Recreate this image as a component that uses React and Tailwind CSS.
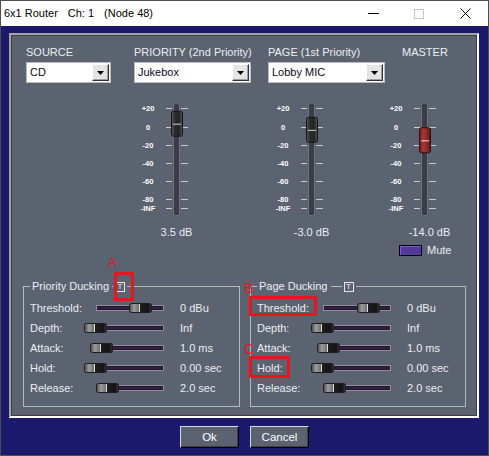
import React from 'react';

const TICKS = [
  ['+20', 8],
  ['0', 27],
  ['-20', 45],
  ['-40', 63],
  ['-60', 81],
  ['-80', 99],
  ['-INF', 108],
];

const PRIORITY_ROWS = [
  ['Threshold:', 68, 33, '0 dBu'],
  ['Depth:', 80, 0, 'Inf'],
  ['Attack:', 74, 0, '1.0 ms'],
  ['Hold:', 80, 0, '0.00 sec'],
  ['Release:', 68, 0, '2.0 sec'],
];

const PAGE_ROWS = [
  ['Threshold:', 68, 34, '0 dBu'],
  ['Depth:', 80, 0, 'Inf'],
  ['Attack:', 74, 0, '1.0 ms'],
  ['Hold:', 80, 0, '0.00 sec'],
  ['Release:', 68, 0, '2.0 sec'],
];

function Select({ value, className }) {
  return (
    <div className={`flex h-[21px] items-center border border-[#b9bdc3] bg-white pl-[3px] pr-[1px] ${className}`}>
      <span className="flex-1 text-[11px] text-[#0a0a20]">{value}</span>
      <div className="flex h-[17px] w-[17px] items-center justify-center border border-t-white border-l-white border-r-[#303030] border-b-[#303030] bg-[#e4e4e4] shadow-[inset_-1px_-1px_0_#a0a0a0]">
        <svg width="7" height="4" className="block">
          <path d="M0 0h7L3.5 4z" fill="#000" />
        </svg>
      </div>
    </div>
  );
}

function Fader({ db, red }) {
  // knob centre, 0 dB sits on y=27, ~0.95px per dB
  const c = 27 - db * 0.95;
  return (
    <svg width="73" height="120" className="block">
      <rect x="33.5" y="3.5" width="6" height="112" rx="2" fill="#393d45" stroke="#6c727b" />
      {TICKS.map(([t, y]) => (
        <g key={t}>
          <line x1="26" x2="32" y1={y + 0.5} y2={y + 0.5} stroke="#c6c9ce" />
          <line x1="41" x2="48" y1={y + 0.5} y2={y + 0.5} stroke="#c6c9ce" />
          <text
            x="8"
            y={y + 0.5}
            textAnchor="middle"
            dominantBaseline="central"
            fontSize="7.5"
            fontWeight="bold"
            fill="#ffffff"
            fontFamily="Liberation Sans, Arial, sans-serif"
          >
            {t}
          </text>
        </g>
      ))}
      <rect
        x="31.5"
        y={c - 12.5}
        width="11"
        height="25"
        rx="2"
        fill={red ? 'url(#knobRed)' : 'url(#knobGray)'}
        stroke={red ? '#3a0c0c' : '#151515'}
      />
      <line x1="33" x2="41" y1={c + 0.5} y2={c + 0.5} stroke={red ? '#f4d0d0' : '#d2d2d2'} />
    </svg>
  );
}

function HSlider({ w, pos }) {
  return (
    <svg width={w} height="12" className="block">
      <rect x="0.5" y="3.5" width={w - 1} height="5" fill="#231628" stroke="#8d9097" />
      <line x1="1" x2={w - 1} y1="6" y2="6" stroke="#4b1f68" />
      <g transform={`translate(${pos} 1)`}>
        <rect x="0.5" y="0.5" width="22" height="9" rx="2" fill="url(#thumb)" stroke="#1c1c1c" />
        <line x1="10.5" x2="10.5" y1="1" y2="9" stroke="#dcdcdc" />
      </g>
    </svg>
  );
}

function Group({ title, rows, lineW, width }) {
  return (
    <fieldset className={`${width} border border-[#b3b9c1]`}>
      <legend className="ml-[6px] px-[2px]">
        <span className="inline-flex items-center">
          <span>{title}</span>
          <span className={`ml-[3px] h-px ${lineW} bg-[#b3b9c1]`} />
          <span className="ml-[2px] flex h-[10px] w-[10px] items-center justify-center border border-[#e6e8ec] text-[8px] leading-none">
            T
          </span>
        </span>
      </legend>
      <div className="px-[6px] pb-[8px] pt-[5px]">
        {rows.map(([label, w, pos, val]) => (
          <div key={label} className="flex h-[20px] items-center">
            <span className="w-[54px]">{label}</span>
            <div className="flex w-[80px] justify-end">
              <HSlider w={w} pos={pos} />
            </div>
            <span className="ml-[16px]">{val}</span>
          </div>
        ))}
      </div>
    </fieldset>
  );
}

function WinButton({ children }) {
  return (
    <button className="flex h-[22px] w-[59px] items-center justify-center border border-t-[#d6d8dc] border-l-[#d6d8dc] border-r-black border-b-black bg-[#5c6370] text-[11.5px] text-white shadow-[inset_-1px_-1px_0_#3a3f48]">
      {children}
    </button>
  );
}

export default function App() {
  return (
    <div className="relative h-[456px] w-[489px] border border-[#4e4e4e] bg-[#1b1a6c] font-['Liberation_Sans',Arial,sans-serif] text-[11px] leading-[13px] text-[#eceef2]">
      <svg width="0" height="0" className="block">
        <defs>
          <linearGradient id="thumb" x1="0" x2="1" y1="0" y2="0">
            <stop offset="0" stopColor="#4a4a4a" />
            <stop offset="0.2" stopColor="#9c9c9c" />
            <stop offset="0.44" stopColor="#6e6e6e" />
            <stop offset="0.5" stopColor="#1e1e1e" />
            <stop offset="0.85" stopColor="#141414" />
            <stop offset="1" stopColor="#3a3a3a" />
          </linearGradient>
          <linearGradient id="knobGray" x1="0" x2="1" y1="0" y2="0">
            <stop offset="0" stopColor="#5c5c5c" />
            <stop offset="0.3" stopColor="#2c2c2c" />
            <stop offset="0.7" stopColor="#242424" />
            <stop offset="1" stopColor="#5a5a5a" />
          </linearGradient>
          <linearGradient id="knobRed" x1="0" x2="1" y1="0" y2="0">
            <stop offset="0" stopColor="#6a1c1c" />
            <stop offset="0.35" stopColor="#a53a3a" />
            <stop offset="0.7" stopColor="#8a2828" />
            <stop offset="1" stopColor="#5a1414" />
          </linearGradient>
        </defs>
      </svg>

      {/* title bar */}
      <div className="flex h-[25px] items-center bg-white pl-[3px] text-[11px] text-black">
        <span>6x1 Router</span>
        <span className="ml-[10px]">Ch: 1</span>
        <span className="ml-[10px]">(Node 48)</span>
        <div className="ml-auto flex">
          <div className="flex h-[25px] w-[46px] items-center justify-center">
            <svg width="11" height="1" className="block">
              <path d="M0 0.5h11" stroke="#000" />
            </svg>
          </div>
          <div className="flex h-[25px] w-[46px] items-center justify-center">
            <svg width="10" height="10" className="block">
              <rect x="0.5" y="0.5" width="9" height="9" fill="none" stroke="#c6c6c6" />
            </svg>
          </div>
          <div className="flex h-[25px] w-[46px] items-center justify-center">
            <svg width="11" height="11" className="block">
              <path d="M0.5 0.5l10 10M10.5 0.5l-10 10" stroke="#000" />
            </svg>
          </div>
        </div>
      </div>

      {/* main panel */}
      <div className="ml-[8px] mt-[7px] h-[385px] w-[470px] border-2 border-t-[#a4a4a4] border-l-[#a4a4a4] border-r-white border-b-white bg-[#5b6270] shadow-[inset_1px_1px_0_#3c3f45,inset_-1px_-1px_0_#3c3f45]">
        <div className="flex pl-[15px] pt-[11px]">
          <div className="w-[108px]">
            <div>SOURCE</div>
            <Select value="CD" className="mt-[3px] w-[85px]" />
          </div>
          <div className="w-[134px]">
            <div>PRIORITY (2nd Priority)</div>
            <Select value="Jukebox" className="mt-[3px] w-[117px]" />
          </div>
          <div className="w-[134px]">
            <div>PAGE (1st Priority)</div>
            <Select value="Lobby MIC" className="mt-[3px] w-[117px]" />
          </div>
          <div>
            <div>MASTER</div>
          </div>
        </div>

        <div className="mt-[17px] flex items-start pl-[129px]">
          <div className="w-[73px]">
            <Fader db={3.5} />
            <div className="mt-[6px] text-center">3.5 dB</div>
          </div>
          <div className="ml-[62px] w-[73px]">
            <Fader db={-3.0} />
            <div className="mt-[6px] text-center">-3.0 dB</div>
          </div>
          <div className="ml-[40px] w-[73px]">
            <Fader db={-14.0} red />
            <div className="mt-[6px] pl-[10px] text-center">-14.0 dB</div>
            <div className="mt-[5px] flex items-center pl-[11px]">
              <span className="h-[11px] w-[23px] border border-black bg-[#53399e] shadow-[inset_1px_1px_0_#7a62c4]" />
              <span className="ml-[5px]">Mute</span>
            </div>
          </div>
        </div>

        <div className="mt-[23px] flex gap-[10px] pl-[12px]">
          <Group title="Priority Ducking" rows={PRIORITY_ROWS} lineW="w-[1px]" width="w-[217px]" />
          <Group title="Page Ducking" rows={PAGE_ROWS} lineW="w-[11px]" width="w-[216px]" />
        </div>
      </div>

      <div className="mt-[8px] flex justify-center gap-[11px]">
        <WinButton>Ok</WinButton>
        <WinButton>Cancel</WinButton>
      </div>

      {/* red annotations */}
      <span className="absolute left-[107px] top-[255px] text-[13px] leading-none text-[#e8141e]">A</span>
      <div className="absolute left-[113px] top-[271px] h-[29px] w-[20px] border-[3px] border-[#e8141e]" />
      <span className="absolute left-[243px] top-[280px] text-[14px] leading-none text-[#e8141e]">B</span>
      <div className="absolute left-[248px] top-[295px] h-[20px] w-[68px] border-[3px] border-[#e8141e]" />
      <span className="absolute left-[243px] top-[341px] text-[14px] leading-none text-[#e8141e]">C</span>
      <div className="absolute left-[248px] top-[355px] h-[22px] w-[41px] border-[3px] border-[#e8141e]" />
    </div>
  );
}
